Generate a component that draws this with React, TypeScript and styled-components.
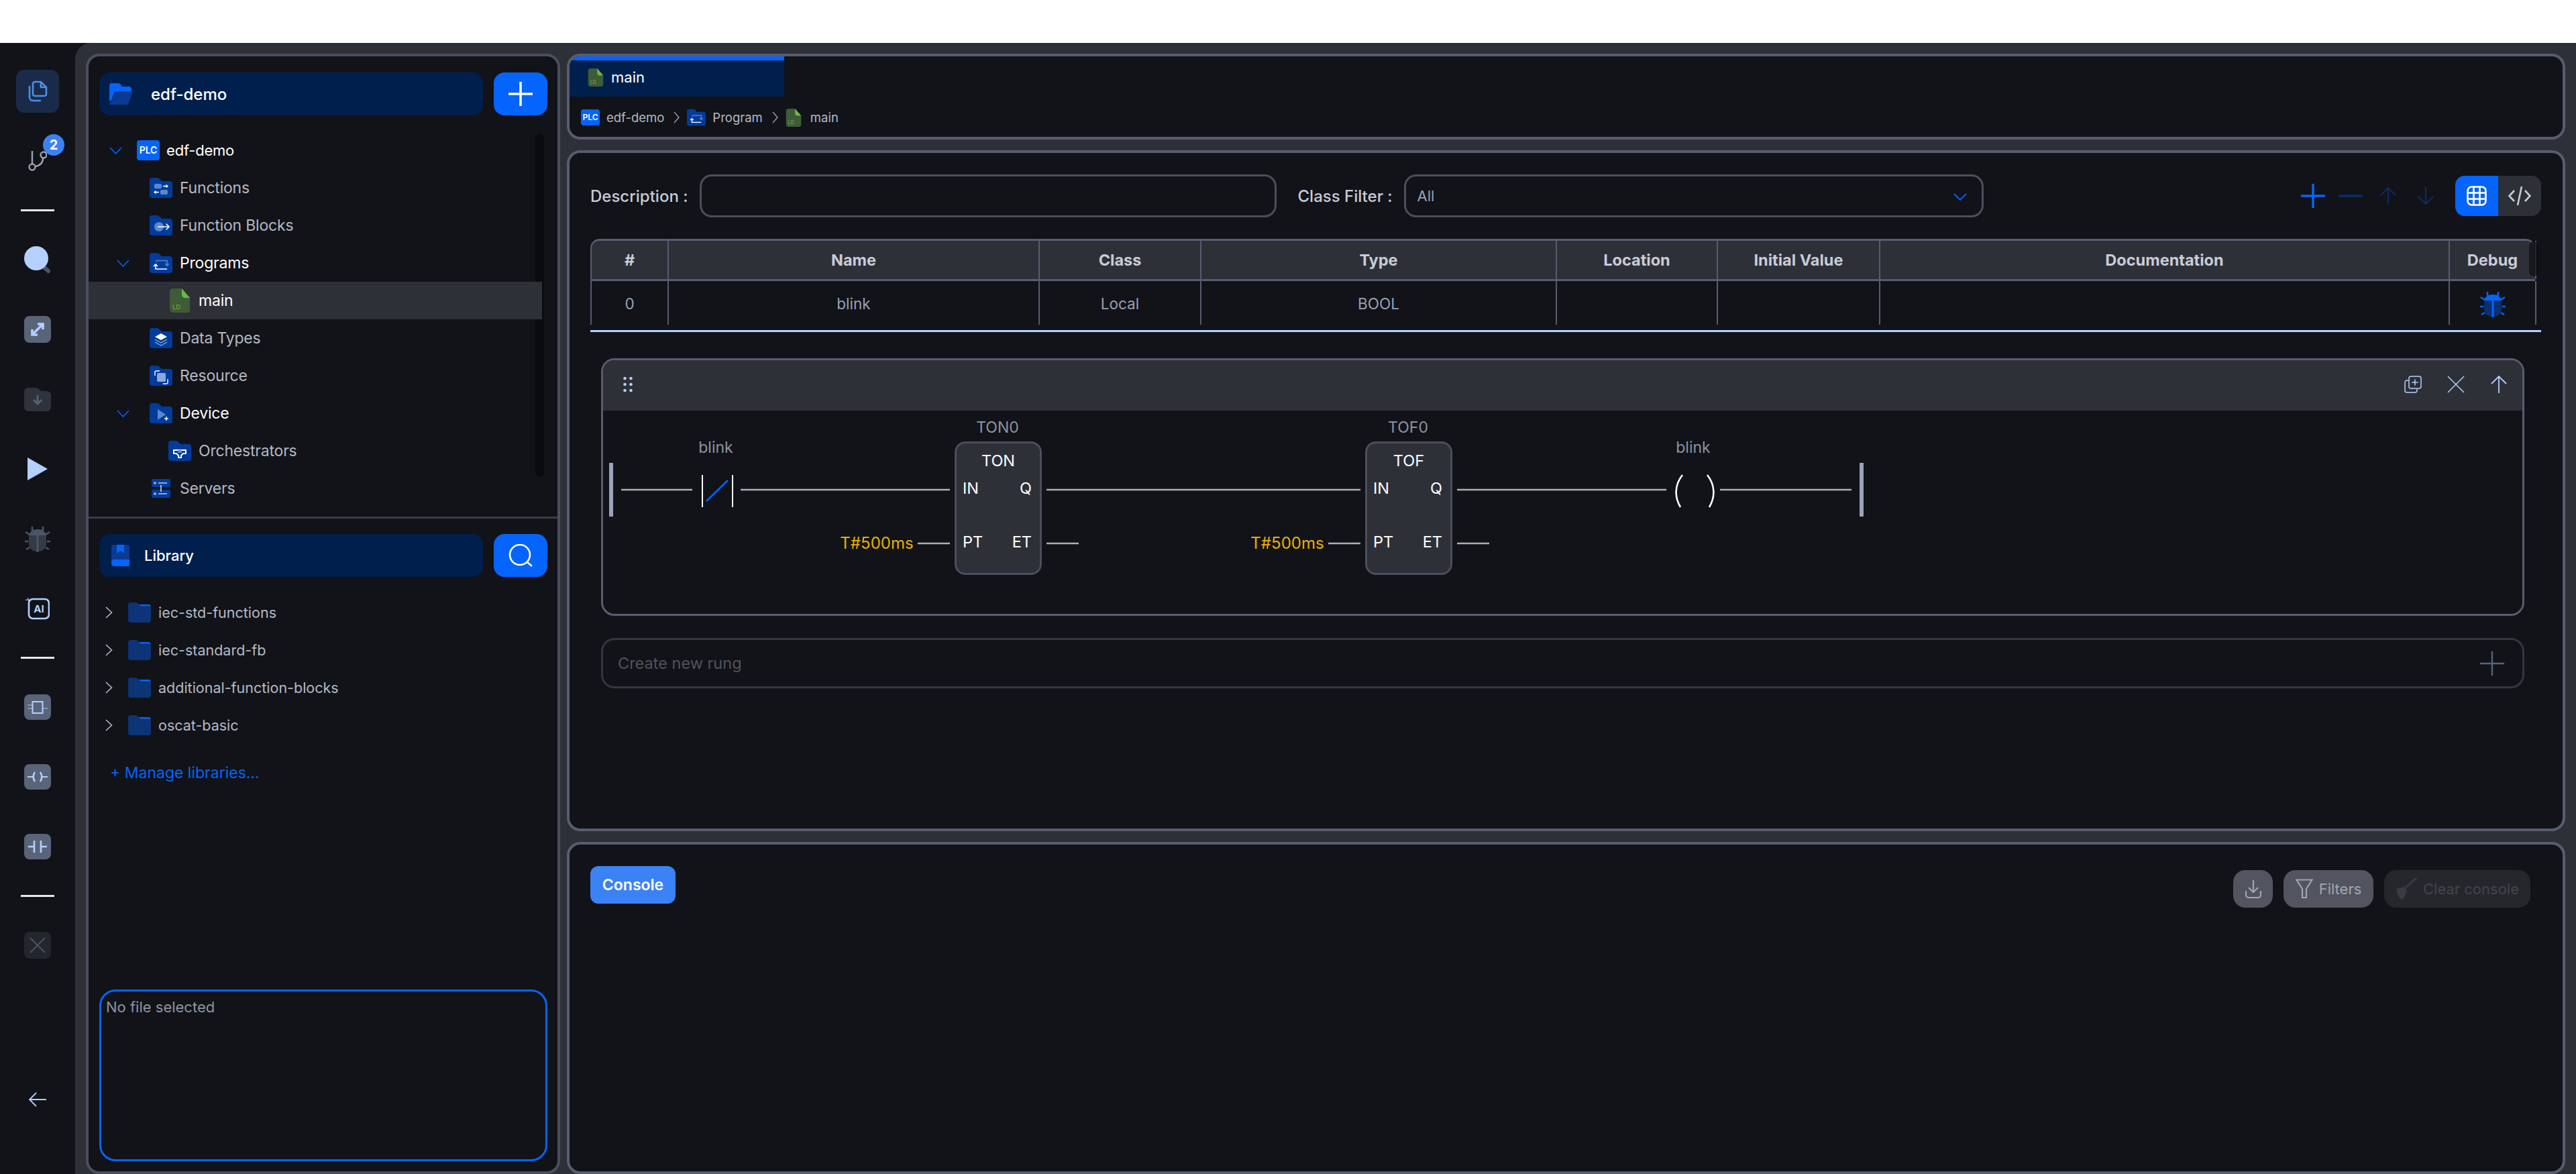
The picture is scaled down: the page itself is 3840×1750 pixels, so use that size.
import React from 'react';
import styled, { createGlobalStyle } from 'styled-components';

const GlobalStyle = createGlobalStyle`
  html, body {
    margin: 0;
    padding: 0;
    background: #ffffff;
    font-family: 'Inter', 'Liberation Sans', sans-serif;
  }
  * { box-sizing: border-box; }
`;

const colors = {
  panel: '#111318',
  shell: '#2e3038',
  border: '#4b4e5c',
  borderBright: '#585c70',
  blue: '#0464fb',
  navy: '#001f4d',
  folder: '#023c9b',
  pale: '#b4d0fe',
  slate: '#5a6478',
  dim: '#b4b9c4',
  label: '#8f93a0',
};

const Page = styled.div`
  width: 3840px;
  height: 1750px;
  padding-top: 64px;
  overflow: hidden;
`;

const Body = styled.div`
  display: flex;
  height: 1686px;
  background: ${colors.panel};
`;

const Rail = styled.nav`
  width: 112px;
  flex: none;
  display: flex;
  flex-direction: column;
  align-items: center;
  gap: 40px;
  padding: 40px 0 79px;
`;

const RailSlot = styled.div<{ $active?: boolean }>`
  position: relative;
  width: 64px;
  height: 64px;
  flex: none;
  display: flex;
  align-items: center;
  justify-content: center;
  border-radius: 12px;
  background: ${p => (p.$active ? '#1a2b4a' : 'transparent')};
`;

const RailFooter = styled(RailSlot)`
  margin-top: auto;
`;

const RailDivider = styled.div`
  width: 50px;
  height: 3px;
  flex: none;
  background: #e5e7eb;
`;

const RailBadge = styled.span`
  position: absolute;
  top: -8px;
  right: -8px;
  width: 32px;
  height: 32px;
  border-radius: 50%;
  background: #3b82f6;
  color: #ffffff;
  font-size: 20px;
  font-weight: 700;
  display: flex;
  align-items: center;
  justify-content: center;
`;

const Workspace = styled.main`
  flex: 1;
  min-width: 0;
  display: flex;
  gap: 10px;
  padding: 16px 16px 0;
  background: ${colors.shell};
  border-top-left-radius: 24px;
`;

const SidePanel = styled.aside`
  width: 707px;
  flex: none;
  display: flex;
  flex-direction: column;
  background: ${colors.panel};
  border: 4px solid ${colors.border};
  border-radius: 20px;
  overflow: hidden;
`;

const SideHeader = styled.div<{ $height: number }>`
  display: flex;
  gap: 16px;
  height: ${p => p.$height}px;
  flex: none;
  margin: 0 15px 0 16px;
`;

const SideTitle = styled.div<{ $gap: number; $pad: number; $size: number }>`
  flex: 1;
  display: flex;
  align-items: center;
  gap: ${p => p.$gap}px;
  padding-left: ${p => p.$pad}px;
  border-radius: 16px;
  background: ${colors.navy};
  color: #ffffff;
  font-size: ${p => p.$size}px;
  font-weight: 500;
`;

const SideAction = styled.div`
  width: 80px;
  flex: none;
  display: flex;
  align-items: center;
  justify-content: center;
  border-radius: 16px;
  background: ${colors.blue};
`;

const ProjectSection = styled.section`
  padding-top: 24px;
  height: 689px;
  flex: none;
  border-bottom: 3px solid #3a3d48;
`;

const TreeList = styled.div`
  position: relative;
  margin-top: 24px;
  padding-right: 23px;
`;

const TreeScrollbar = styled.div`
  position: absolute;
  top: 4px;
  right: 20px;
  width: 13px;
  height: 511px;
  border-radius: 7px;
  background: #0a0b0e;
`;

const TreeRow = styled.div<{ $indent: number; $active?: boolean; $selected?: boolean }>`
  position: relative;
  display: flex;
  align-items: center;
  height: 56px;
  padding-left: ${p => p.$indent}px;
  background: ${p => (p.$selected ? colors.shell : 'transparent')};
  color: ${p => (p.$active ? '#ffffff' : colors.dim)};
  font-size: 23px;
  letter-spacing: -0.2px;
`;

const TreeChevron = styled.svg`
  width: 19px;
  height: 11px;
  flex: none;
  fill: none;
  stroke: ${colors.blue};
  stroke-width: 1.6;
`;

const ChevronGap = styled.span<{ $width: number }>`
  width: ${p => p.$width}px;
  flex: none;
`;

const TreeLabel = styled.span<{ $gap: number; $size?: number }>`
  margin-left: ${p => p.$gap}px;
  font-size: ${p => p.$size ?? 23}px;
`;

const LibrarySection = styled.section`
  flex: 1;
  min-height: 0;
  display: flex;
  flex-direction: column;
  padding: 23px 0 15px;
`;

const LibraryList = styled.div`
  margin-top: 25px;
`;

const LibraryRow = styled.div`
  display: flex;
  align-items: center;
  height: 56px;
  padding-left: 25px;
  color: ${colors.dim};
  font-size: 21.5px;
`;

const LibraryLabel = styled.span`
  margin-left: 11px;
`;

const ManageLink = styled.div`
  margin: 29px 0 0 32px;
  color: ${colors.blue};
  font-size: 23px;
  line-height: 28px;
`;

const NotesBox = styled.div`
  margin: auto 15px 0 16px;
  height: 256px;
  padding: 10px 7px;
  border: 3px solid ${colors.blue};
  border-radius: 24px;
  color: ${colors.label};
  font-size: 22px;
`;

const MainColumn = styled.div`
  flex: 1;
  min-width: 0;
  display: flex;
  flex-direction: column;
  gap: 16px;
`;

const Card = styled.section`
  background: ${colors.panel};
  border: 4px solid ${colors.borderBright};
  border-radius: 20px;
  overflow: hidden;
`;

const TabsCard = styled(Card)`
  height: 128px;
  flex: none;
`;

const Tab = styled.div`
  width: 320px;
  height: 60px;
  display: flex;
  align-items: center;
  gap: 11px;
  padding: 0 0 4px 27px;
  background: ${colors.navy};
  border-top: 6px solid ${colors.blue};
  color: #ffffff;
  font-size: 22px;
`;

const Breadcrumb = styled.div`
  display: flex;
  align-items: center;
  height: 60px;
  padding: 2px 0 0 17px;
  color: ${colors.dim};
  font-size: 18.5px;
`;

const CrumbText = styled.span<{ $lead: number }>`
  margin: 0 14px 0 ${p => p.$lead}px;
`;

const CrumbArrow = styled.svg`
  width: 10px;
  height: 20px;
  margin-right: 10px;
  fill: none;
  stroke: #8f93a0;
  stroke-width: 1.6;
`;

const EditorCard = styled(Card)`
  height: 1015px;
  flex: none;
  padding: 32px 32px 0 31px;
`;

const Toolbar = styled.div`
  display: flex;
  align-items: center;
  height: 64px;
`;

const FieldLabel = styled.label`
  margin-right: 17px;
  color: #c8ccd6;
  font-size: 24px;
  font-weight: 500;
`;

const TextField = styled.div<{ $width: number; $gap?: number }>`
  position: relative;
  width: ${p => p.$width}px;
  height: 64px;
  margin-right: ${p => p.$gap ?? 0}px;
  display: flex;
  align-items: center;
  padding-left: 17px;
  border: 3px solid ${colors.border};
  border-radius: 18px;
  color: #9aa0b4;
  font-size: 22px;
`;

const SelectChevron = styled.svg`
  position: absolute;
  right: 22px;
  top: 25px;
  width: 20px;
  height: 11px;
  fill: none;
  stroke: ${colors.blue};
  stroke-width: 1.8;
`;

const RowActions = styled.div`
  display: flex;
  margin-left: auto;
  margin-right: 16px;
`;

const RowAction = styled.div`
  width: 56px;
  height: 56px;
  display: flex;
  align-items: center;
  justify-content: center;
`;

const ViewToggle = styled.div`
  display: flex;
  width: 128px;
  height: 60px;
  border-radius: 14px;
  overflow: hidden;
`;

const ToggleButton = styled.div<{ $on?: boolean }>`
  flex: 1;
  display: flex;
  align-items: center;
  justify-content: center;
  background: ${p => (p.$on ? colors.blue : colors.shell)};
`;

const TableWrap = styled.div`
  position: relative;
  margin-top: 32px;
  border-bottom: 3px solid ${colors.pale};
  padding-bottom: 8px;
`;

const columns = '115px 553px 241px 530px 240px 242px 849px 129px';

const HeadRow = styled.div`
  display: grid;
  grid-template-columns: ${columns};
  height: 63px;
  background: ${colors.shell};
  border-top: 3px solid ${colors.borderBright};
  border-bottom: 3px solid ${colors.borderBright};
  border-left: 2px solid ${colors.borderBright};
  border-top-left-radius: 14px;
  border-top-right-radius: 14px;
  width: 2899px;
`;

const DataRow = styled.div`
  display: grid;
  grid-template-columns: ${columns};
  height: 65px;
  border-left: 2px solid ${colors.borderBright};
  width: 2899px;
`;

const HeadCell = styled.div`
  display: flex;
  align-items: center;
  justify-content: center;
  border-right: 2px solid ${colors.borderBright};
  color: #c8ccd6;
  font-size: 23.5px;
  font-weight: 700;
`;

const DataCell = styled.div`
  display: flex;
  align-items: center;
  justify-content: center;
  padding-top: 2px;
  border-right: 2px solid ${colors.borderBright};
  color: #9aa0b4;
  font-size: 22.5px;
`;

const TableScrollbar = styled.div`
  position: absolute;
  top: 4px;
  right: 4px;
  width: 14px;
  height: 52px;
  border-radius: 7px;
  background: rgba(10, 11, 14, 0.65);
`;

const Rung = styled.div`
  margin: 39px 25px 0 16px;
  height: 384px;
  display: flex;
  flex-direction: column;
  border: 3px solid ${colors.borderBright};
  border-radius: 20px;
  overflow: hidden;
`;

const RungHeader = styled.div`
  display: flex;
  align-items: center;
  justify-content: space-between;
  height: 75px;
  flex: none;
  padding: 0 3px 4px 30px;
  background: ${colors.shell};
`;

const RungActions = styled.div`
  display: flex;
`;

const RungAction = styled.div`
  width: 64px;
  display: flex;
  justify-content: center;
`;

const RungCanvas = styled.div`
  position: relative;
  flex: 1;
`;

const Wires = styled.svg`
  position: absolute;
  left: 0;
  top: 0;
  width: 2861px;
  height: 302px;
`;

const NodeLabel = styled.span<{ $x: number; $y: number; $tone: string; $size: number }>`
  position: absolute;
  left: ${p => p.$x}px;
  top: ${p => p.$y}px;
  transform: translate(-50%, -50%);
  color: ${p => p.$tone};
  font-size: ${p => p.$size}px;
  white-space: nowrap;
`;

const FbBlock = styled.div<{ $x: number }>`
  position: absolute;
  left: ${p => p.$x}px;
  top: 46px;
  width: 130px;
  height: 199px;
  display: flex;
  flex-direction: column;
  background: ${colors.shell};
  border: 3px solid ${colors.border};
  border-radius: 16px;
  color: #ffffff;
  font-size: 23.5px;
`;

const FbTitle = styled.div`
  height: 50px;
  display: flex;
  align-items: center;
  justify-content: center;
`;

const FbPins = styled.div`
  display: flex;
  flex-direction: column;
  gap: 48px;
  padding: 0 12px 0 9px;
`;

const FbPinRow = styled.div`
  display: flex;
  justify-content: space-between;
  align-items: center;
  height: 32px;
`;

const NewRung = styled.div`
  margin: 33px 25px 0 16px;
  height: 75px;
  display: flex;
  align-items: center;
  justify-content: space-between;
  padding: 0 27px 0 22px;
  border: 3px solid #33363f;
  border-radius: 20px;
  color: #50535c;
  font-size: 23.5px;
`;

const ConsoleCard = styled(Card)`
  flex: 1;
  min-height: 0;
  display: flex;
  align-items: flex-start;
  justify-content: space-between;
  padding: 32px 48px 0 31px;
`;

const ConsoleTab = styled.div`
  width: 127px;
  height: 56px;
  display: flex;
  align-items: center;
  justify-content: center;
  border-radius: 12px;
  background: #3b82f6;
  color: #ffffff;
  font-size: 23px;
  font-weight: 600;
`;

const ConsoleTools = styled.div`
  display: flex;
  gap: 16px;
  margin-top: 6px;
`;

const ConsoleButton = styled.div<{ $off?: boolean; $width: number }>`
  width: ${p => p.$width}px;
  height: 56px;
  display: flex;
  align-items: center;
  justify-content: center;
  gap: 9px;
  border-radius: 18px;
  background: ${p => (p.$off ? '#25272c' : '#52555f')};
  color: ${p => (p.$off ? '#42454c' : '#a3a6af')};
  font-size: 22px;
`;

const FlexIcon = styled.svg<{ $left?: number }>`
  flex: none;
  margin-left: ${p => p.$left ?? 0}px;
`;

const FitIcon = () => (
  <svg width="40" height="40" viewBox="0 0 40 40">
    <rect width="40" height="40" rx="8" fill={colors.slate} />
    <path d="M12 28 28 12M12 20v8h8M20 12h8v8" fill="none" stroke={colors.pale} strokeWidth="3.6" />
  </svg>
);

const FolderDownIcon = () => (
  <svg width="40" height="35" viewBox="0 0 40 35">
    <path d="M6 0h12c2 0 3 1 5 3 1 1 2 2 4 2h7a6 6 0 0 1 6 6v18a6 6 0 0 1-6 6H6a6 6 0 0 1-6-6V6a6 6 0 0 1 6-6z" fill="#2f333c" />
    <path d="M20 11v13M14 18l6 6 6-6" fill="none" stroke="#55617a" strokeWidth="3" />
  </svg>
);

const BugIcon = ({ shell, dark, size }: { shell: string; dark: string; size: number }) => (
  <svg width={size} height={size} viewBox="0 0 38 40">
    <path d="M11 2v6M27 2v6M7 14 1 10M31 14l6-4M5 24H0M33 24h5M7 33l-5 3M31 33l5 3" fill="none" stroke={shell} strokeWidth="2.6" />
    <path d="M6 16C7 9 12 6 19 6s12 3 13 10z" fill={shell} />
    <path d="M6 15h13v24C11 39 6 35 6 27z" fill={dark} />
    <path d="M32 15H19v24c8 0 13-4 13-12z" fill={dark} />
    <path d="M19 14v26" stroke={shell} strokeWidth="3" />
  </svg>
);

const FolderShape = ({ fill = colors.folder }: { fill?: string }) => (
  <path d="M4 0h7c2 0 3 1 4 2l2 2c1 1 2 1 3 1h10a4 4 0 0 1 4 4v17a4 4 0 0 1-4 4H4a4 4 0 0 1-4-4V4a4 4 0 0 1 4-4z" fill={fill} />
);

const glyphs: Record<string, React.ReactNode> = {
  functions: (
    <>
      <rect x="7" y="9" width="11" height="7" rx="2" fill="#5c86d0" />
      <rect x="16" y="18" width="11" height="7" rx="2" fill="#5c86d0" />
      <path d="M20 12.5h7M24.5 10.5l2.5 2-2.5 2M14 21.500H7M9.500 19.500 7 21.500l2.500 2" fill="none" stroke="#fff" strokeWidth="1.3" />
    </>
  ),
  blocks: (
    <>
      <circle cx="14" cy="17" r="7" fill="#5c86d0" />
      <path d="M12 17h17M24.500 12.500 29 17l-4.500 4.500" fill="none" stroke="#fff" strokeWidth="1.5" />
    </>
  ),
  programs: (
    <>
      <path d="M10 13.500V11.500h16v7" fill="none" stroke="#5c86d0" strokeWidth="1.5" />
      <path d="M23 16l3 3 3-3" fill="none" stroke="#5c86d0" strokeWidth="1.5" />
      <path d="M26 24H9v-7M6 20l3-3 3 3" fill="none" stroke="#fff" strokeWidth="1.6" />
    </>
  ),
  types: (
    <>
      <path d="M17 8l9 5-9 5-9-5z" fill="#fff" />
      <path d="M8 17l9 5 9-5M8 21l9 5 9-5" fill="none" stroke="#8aa9e0" strokeWidth="1.3" />
    </>
  ),
  resource: (
    <>
      <rect x="11" y="11" width="13" height="13" rx="2" fill="#8aa9e0" />
      <path d="M8 15v-5a2 2 0 0 1 2-2h5M27 20v5a2 2 0 0 1-2 2h-5" fill="none" stroke="#fff" strokeWidth="1.4" />
    </>
  ),
  device: (
    <>
      <path d="M12 9l12 8-12 8z" fill="#5c86d0" />
      <path d="M22 23h6M25 20v6" stroke="#fff" strokeWidth="1.5" />
    </>
  ),
  orchestrators: (
    <>
      <path d="M8 14h18v5h-4l-3 3v3h-4v-3l-3-3H8z" fill="none" stroke="#fff" strokeWidth="2" />
      <rect x="14" y="14" width="6" height="4" fill="#5c86d0" />
    </>
  ),
};

const TreeFolderIcon = ({ glyph }: { glyph: string }) => (
  <FlexIcon width="34" height="30" viewBox="0 0 34 30">
    <FolderShape />
    {glyphs[glyph]}
  </FlexIcon>
);

const ServersIcon = () => (
  <FlexIcon $left={3} width="28" height="28" viewBox="0 0 28 28">
    <rect width="28" height="12" rx="2" fill={colors.folder} />
    <rect y="16" width="28" height="12" rx="2" fill={colors.folder} />
    <circle cx="5" cy="6" r="2" fill="#8aa9e0" />
    <circle cx="5" cy="22" r="2" fill="#8aa9e0" />
    <path d="M10 6h13M10 22h13" stroke="#8aa9e0" strokeWidth="2" />
    <path d="M14 9v10" stroke="#dfe7f7" strokeWidth="1.5" />
  </FlexIcon>
);

const LdFileIcon = ({ w, h }: { w: number; h: number }) => (
  <FlexIcon width={w} height={h} viewBox="0 0 30 36">
    <path d="M5 0h13l12 14v18a4 4 0 0 1-4 4H5a5 5 0 0 1-5-5V5a5 5 0 0 1 5-5z" fill="#3e5c37" />
    <path d="M18 0l12 14H22a5 5 0 0 1-4-5z" fill="#6fb544" />
    <text x="4" y="31" fontSize="9.500" fill="#6fb544" fontFamily="Inter, sans-serif">LD</text>
  </FlexIcon>
);

const PlcIcon = ({ w, h, font }: { w: number; h: number; font: number }) => (
  <FlexIcon width={w} height={h} viewBox={`0 0 ${w} ${h}`}>
    <rect width={w} height={h} rx="4" fill={colors.blue} />
    <text x={w / 2} y={h / 2 + font * 0.37} textAnchor="middle" fontSize={font} fontWeight="600" fill="#fff" fontFamily="Inter, sans-serif">PLC</text>
  </FlexIcon>
);

const Chevron = () => (
  <TreeChevron viewBox="0 0 19 11">
    <path d="M1 1l8.500 9L18 1" />
  </TreeChevron>
);

const LibraryFolder = () => (
  <FlexIcon $left={23} width="34" height="30" viewBox="0 0 34 30">
    <path d="M14 3h16a4 4 0 0 1 4 4v6H20z" fill={colors.blue} />
    <path d="M4 0h7c2 0 3 1 4 2l2 2c1 1 2 1.500 3 1.500h14V26a4 4 0 0 1-4 4H4a4 4 0 0 1-4-4V4a4 4 0 0 1 4-4z" fill="#0d3476" />
  </FlexIcon>
);

const columnsData = [
  ['#', '0'],
  ['Name', 'blink'],
  ['Class', 'Local'],
  ['Type', 'BOOL'],
  ['Location', ''],
  ['Initial Value', ''],
  ['Documentation', ''],
];

const libraries = ['iec-std-functions', 'iec-standard-fb', 'additional-function-blocks', 'oscat-basic'];

const Block = ({ x, name }: { x: number; name: string }) => (
  <FbBlock $x={x}>
    <FbTitle>{name}</FbTitle>
    <FbPins>
      <FbPinRow><span>IN</span><span>Q</span></FbPinRow>
      <FbPinRow><span>PT</span><span>ET</span></FbPinRow>
    </FbPins>
  </FbBlock>
);

const ProjectTree = () => (
  <TreeList>
    <TreeScrollbar />
    <TreeRow $indent={31} $active>
      <Chevron />
      <ChevronGap $width={22} />
      <PlcIcon w={34} h={30} font={14} />
      <TreeLabel $gap={10} $size={22}>edf-demo</TreeLabel>
    </TreeRow>
    <TreeRow $indent={91}>
      <TreeFolderIcon glyph="functions" />
      <TreeLabel $gap={11}>Functions</TreeLabel>
    </TreeRow>
    <TreeRow $indent={91}>
      <TreeFolderIcon glyph="blocks" />
      <TreeLabel $gap={11}>Function Blocks</TreeLabel>
    </TreeRow>
    <TreeRow $indent={42} $active>
      <Chevron />
      <ChevronGap $width={30} />
      <TreeFolderIcon glyph="programs" />
      <TreeLabel $gap={11}>Programs</TreeLabel>
    </TreeRow>
    <TreeRow $indent={121} $active $selected>
      <LdFileIcon w={30} h={36} />
      <TreeLabel $gap={13}>main</TreeLabel>
    </TreeRow>
    <TreeRow $indent={91}>
      <TreeFolderIcon glyph="types" />
      <TreeLabel $gap={11}>Data Types</TreeLabel>
    </TreeRow>
    <TreeRow $indent={91}>
      <TreeFolderIcon glyph="resource" />
      <TreeLabel $gap={11}>Resource</TreeLabel>
    </TreeRow>
    <TreeRow $indent={42} $active>
      <Chevron />
      <ChevronGap $width={30} />
      <TreeFolderIcon glyph="device" />
      <TreeLabel $gap={11}>Device</TreeLabel>
    </TreeRow>
    <TreeRow $indent={119}>
      <TreeFolderIcon glyph="orchestrators" />
      <TreeLabel $gap={11}>Orchestrators</TreeLabel>
    </TreeRow>
    <TreeRow $indent={91}>
      <ServersIcon />
      <TreeLabel $gap={14}>Servers</TreeLabel>
    </TreeRow>
  </TreeList>
);

const App: React.FC = () => {
  return (
    <Page>
      <GlobalStyle />
      <Body>
        <Rail>
          <RailSlot $active>
            <svg width="30" height="32" viewBox="0 0 30 32" fill="none" stroke="#4c8fe8" strokeWidth="2.6">
              <path d="M11 2h9l8 8v10a3 3 0 0 1-3 3H11a3 3 0 0 1-3-3V5a3 3 0 0 1 3-3z" />
              <path d="M20 2v8h8" />
              <path d="M3 8v17a5 5 0 0 0 5 5h12" />
            </svg>
          </RailSlot>
          <RailSlot>
            <svg width="28" height="30" viewBox="0 0 28 30" fill="none" stroke="#a0a3ae" strokeWidth="2.4">
              <path d="M6 0v20" />
              <circle cx="6" cy="24" r="4.500" />
              <circle cx="23" cy="6" r="4.500" />
              <path d="M10 23c8-1 12-5 12-12" />
            </svg>
            <RailBadge>2</RailBadge>
          </RailSlot>
          <RailDivider />
          <RailSlot>
            <svg width="42" height="42" viewBox="0 0 42 42">
              <path d="M28 30l9 8" stroke="#4b5568" strokeWidth="6" strokeLinecap="round" />
              <circle cx="19" cy="19" r="18" fill={colors.pale} />
            </svg>
          </RailSlot>
          <RailSlot><FitIcon /></RailSlot>
          <RailSlot><FolderDownIcon /></RailSlot>
          <RailSlot>
            <svg width="30" height="34" viewBox="0 0 30 34"><path d="M0 0l30 17L0 34z" fill={colors.pale} /></svg>
          </RailSlot>
          <RailSlot>
            <BugIcon shell="#4b5568" dark="#343a46" size={40} />
          </RailSlot>
          <RailSlot>
            <svg width="36" height="34" viewBox="0 0 36 34" fill="none">
              <rect x="5" y="3" width="30" height="29" rx="6" stroke={colors.pale} strokeWidth="2.600" />
              <path d="M0 4h6M4 1v5" stroke={colors.pale} strokeWidth="1" />
              <text x="20" y="23" textAnchor="middle" fontSize="15" fontWeight="700" fill={colors.pale} fontFamily="Inter, sans-serif">AI</text>
            </svg>
          </RailSlot>
          <RailDivider />
          <RailSlot>
            <svg width="40" height="38" viewBox="0 0 40 38" fill="none">
              <rect width="40" height="38" rx="8" fill={colors.slate} />
              <rect x="12.500" y="11" width="15" height="17" stroke={colors.pale} strokeWidth="2" />
              <path d="M5 16h7M5 21h7M28 21h7" stroke={colors.pale} strokeOpacity="0.6" strokeWidth="1.500" />
            </svg>
          </RailSlot>
          <RailSlot>
            <svg width="40" height="38" viewBox="0 0 40 38" fill="none">
              <rect width="40" height="38" rx="8" fill={colors.slate} />
              <path d="M5 19h8M27 19h8" stroke={colors.pale} strokeWidth="2" />
              <path d="M16 12c-3 4-3 10 0 14M24 12c3 4 3 10 0 14" stroke={colors.pale} strokeWidth="2.600" />
            </svg>
          </RailSlot>
          <RailSlot>
            <svg width="40" height="38" viewBox="0 0 40 38" fill="none">
              <rect width="40" height="38" rx="8" fill={colors.slate} />
              <path d="M6 19h9M15 10v18M25 10v18M25 19h9" stroke={colors.pale} strokeWidth="2.600" />
            </svg>
          </RailSlot>
          <RailDivider />
          <RailSlot>
            <svg width="40" height="40" viewBox="0 0 40 40" fill="none">
              <rect width="40" height="40" rx="8" fill="#23262d" />
              <path d="M9 9l22 22M31 9 9 31" stroke="#4d5566" strokeWidth="1.800" />
            </svg>
          </RailSlot>
          <RailFooter>
            <svg width="26" height="22" viewBox="0 0 26 22" fill="none" stroke={colors.pale} strokeWidth="1.800">
              <path d="M26 11H1M11 1 1 11l10 10" />
            </svg>
          </RailFooter>
        </Rail>

        <Workspace>
          <SidePanel>
            <ProjectSection>
              <SideHeader $height={64}>
                <SideTitle $gap={28} $pad={15} $size={24}>
                  <FlexIcon width="34" height="32" viewBox="0 0 34 32">
                    <path d="M4 0h9c2 0 3 1 4 2l2 3h10a4 4 0 0 1 4 4v4H8L3 26H0V4a4 4 0 0 1 4-4z" fill={colors.blue} />
                    <path d="M8 12h24a2 2 0 0 1 2 3l-5 14a4 4 0 0 1-4 3H0z" fill="#0a3a94" />
                  </FlexIcon>
                  edf-demo
                </SideTitle>
                <SideAction>
                  <svg width="36" height="36" viewBox="0 0 36 36"><path d="M18 0v36M0 18h36" stroke="#fff" strokeWidth="3.500" strokeLinecap="round" /></svg>
                </SideAction>
              </SideHeader>
              <ProjectTree />
            </ProjectSection>

            <LibrarySection>
              <SideHeader $height={64}>
                <SideTitle $gap={22} $pad={18} $size={22}>
                  <FlexIcon width="27" height="32" viewBox="0 0 27 32">
                    <path d="M4 0h19a4 4 0 0 1 4 4v20H0V4a4 4 0 0 1 4-4z" fill="#0a3a94" />
                    <path d="M8 0h11v13l-5.500-4L8 13z" fill={colors.blue} />
                    <path d="M4 22h23v10H4a4 4 0 0 1-4-4v-2a4 4 0 0 1 4-4z" fill={colors.blue} />
                  </FlexIcon>
                  Library
                </SideTitle>
                <SideAction>
                  <svg width="36" height="34" viewBox="0 0 36 34" fill="none" stroke="#fff" strokeWidth="2.600">
                    <circle cx="17" cy="16" r="15" />
                    <path d="M28 27l7 6" />
                  </svg>
                </SideAction>
              </SideHeader>
              <LibraryList>
                {libraries.map(name => (
                  <LibraryRow key={name}>
                    <FlexIcon width="11" height="18" viewBox="0 0 11 18" fill="none" stroke={colors.dim} strokeWidth="1.600">
                      <path d="M1 1l8.500 8L1 17" />
                    </FlexIcon>
                    <LibraryFolder />
                    <LibraryLabel>{name}</LibraryLabel>
                  </LibraryRow>
                ))}
              </LibraryList>
              <ManageLink>+ Manage libraries…</ManageLink>
              <NotesBox>No file selected</NotesBox>
            </LibrarySection>
          </SidePanel>

          <MainColumn>
            <TabsCard>
              <Tab>
                <LdFileIcon w={24} h={27} />
                main
              </Tab>
              <Breadcrumb>
                <PlcIcon w={28} h={24} font={12} />
                <CrumbText $lead={10}>edf-demo</CrumbText>
                <CrumbArrow viewBox="0 0 10 20"><path d="M1 2l7 8-7 8" /></CrumbArrow>
                <FlexIcon width="28" height="26" viewBox="0 0 34 30">
                  <FolderShape />
                  {glyphs.programs}
                </FlexIcon>
                <CrumbText $lead={10}>Program</CrumbText>
                <CrumbArrow viewBox="0 0 10 20"><path d="M1 2l7 8-7 8" /></CrumbArrow>
                <LdFileIcon w={24} h={27} />
                <CrumbText $lead={13}>main</CrumbText>
              </Breadcrumb>
            </TabsCard>

            <EditorCard>
              <Toolbar>
                <FieldLabel>Description :</FieldLabel>
                <TextField $width={860} $gap={32} />
                <FieldLabel>Class Filter :</FieldLabel>
                <TextField $width={864}>
                  All
                  <SelectChevron viewBox="0 0 20 11"><path d="M1 1l9 9 9-9" /></SelectChevron>
                </TextField>
                <RowActions>
                  <RowAction>
                    <svg width="36" height="36" viewBox="0 0 36 36"><path d="M18 0v36M0 18h36" stroke={colors.blue} strokeWidth="3.500" strokeLinecap="round" /></svg>
                  </RowAction>
                  <RowAction>
                    <svg width="36" height="4" viewBox="0 0 36 4"><path d="M2 2h32" stroke="#0b2c63" strokeWidth="4" strokeLinecap="round" /></svg>
                  </RowAction>
                  <RowAction>
                    <svg width="24" height="26" viewBox="0 0 24 26" fill="none" stroke="#0b2c63" strokeWidth="2.200"><path d="M12 26V1M1 12 12 1l11 11" /></svg>
                  </RowAction>
                  <RowAction>
                    <svg width="24" height="26" viewBox="0 0 24 26" fill="none" stroke="#0b2c63" strokeWidth="2.200"><path d="M12 0v25M1 14l11 11 11-11" /></svg>
                  </RowAction>
                </RowActions>
                <ViewToggle>
                  <ToggleButton $on>
                    <svg width="30" height="30" viewBox="0 0 30 30" fill="none" stroke="#fff" strokeWidth="2.600">
                      <rect x="1.500" y="1.500" width="27" height="27" rx="6" />
                      <path d="M1.500 10.500h27M1.500 19.500h27M10.500 1.500v27M19.500 1.500v27" />
                    </svg>
                  </ToggleButton>
                  <ToggleButton>
                    <svg width="34" height="30" viewBox="0 0 34 30" fill="none" stroke="#c8ccd6" strokeWidth="2.600">
                      <path d="M9 7 1.500 15 9 23M25 7l7.500 8-7.500 8M20 1l-6 28" />
                    </svg>
                  </ToggleButton>
                </ViewToggle>
              </Toolbar>

              <TableWrap>
                <HeadRow>
                  {columnsData.map(([head]) => <HeadCell key={head}>{head}</HeadCell>)}
                  <HeadCell>Debug</HeadCell>
                </HeadRow>
                <DataRow>
                  {columnsData.map(([head, value]) => <DataCell key={head}>{value}</DataCell>)}
                  <DataCell>
                    <BugIcon shell={colors.blue} dark="#0b3070" size={40} />
                  </DataCell>
                </DataRow>
                <TableScrollbar />
              </TableWrap>

              <Rung>
                <RungHeader>
                  <svg width="14" height="24" viewBox="0 0 14 24" fill={colors.pale}>
                    <circle cx="2.500" cy="3" r="2.300" /><circle cx="11.500" cy="3" r="2.300" />
                    <circle cx="2.500" cy="12" r="2.300" /><circle cx="11.500" cy="12" r="2.300" />
                    <circle cx="2.500" cy="21" r="2.300" /><circle cx="11.500" cy="21" r="2.300" />
                  </svg>
                  <RungActions>
                    <RungAction>
                      <svg width="26" height="26" viewBox="0 0 26 26" fill="none" stroke={colors.pale} strokeWidth="1.500">
                        <rect x="7" y="1" width="18" height="18" rx="3" />
                        <path d="M16 5.500v9M11.500 10h9M6 7H4a3 3 0 0 0-3 3v12a3 3 0 0 0 3 3h12a3 3 0 0 0 3-3v-2" />
                      </svg>
                    </RungAction>
                    <RungAction>
                      <svg width="26" height="26" viewBox="0 0 26 26" fill="none" stroke={colors.pale} strokeWidth="1.500"><path d="M1 1l24 24M25 1 1 25" /></svg>
                    </RungAction>
                    <RungAction>
                      <svg width="24" height="26" viewBox="0 0 24 26" fill="none" stroke={colors.pale} strokeWidth="1.800"><path d="M12 26V1M1 12 12 1l11 11" /></svg>
                    </RungAction>
                  </RungActions>
                </RungHeader>

                <RungCanvas>
                  <Wires viewBox="899 612 2861 302">
                    <path d="M926 730h106M1104 730h312M1560 730h468M2172 730h312M2564 730h196M1368 810h48M1560 810h48M1980 810h48M2172 810h48" stroke="#b0b0b0" strokeWidth="2.600" />
                    <path d="M911 690v80M2775 690v80" stroke="#9ca3b8" strokeWidth="6" />
                    <path d="M1047 708v48M1092 708v48" stroke="#fff" strokeWidth="2" />
                    <path d="M1053 747l32-31" stroke={colors.blue} strokeWidth="2.600" />
                    <path d="M2508 708c-12 15-12 33-3 48M2545 708c12 15 12 33 3 48" fill="none" stroke="#fff" strokeWidth="2.600" />
                  </Wires>
                  <NodeLabel $x={168} $y={55} $size={23} $tone={colors.label}>blink</NodeLabel>
                  <NodeLabel $x={588} $y={25} $size={23} $tone={colors.label}>TON0</NodeLabel>
                  <NodeLabel $x={408} $y={197} $size={24} $tone="#eab000">T#500ms</NodeLabel>
                  <Block x={524} name="TON" />
                  <NodeLabel $x={1200} $y={25} $size={23} $tone={colors.label}>TOF0</NodeLabel>
                  <NodeLabel $x={1020} $y={197} $size={24} $tone="#eab000">T#500ms</NodeLabel>
                  <Block x={1136} name="TOF" />
                  <NodeLabel $x={1625} $y={55} $size={23} $tone={colors.label}>blink</NodeLabel>
                </RungCanvas>
              </Rung>

              <NewRung>
                Create new rung
                <svg width="36" height="36" viewBox="0 0 36 36"><path d="M18 0v36M0 18h36" stroke="#5a6478" strokeWidth="2.400" /></svg>
              </NewRung>
            </EditorCard>

            <ConsoleCard>
              <ConsoleTab>Console</ConsoleTab>
              <ConsoleTools>
                <ConsoleButton $width={59}>
                  <svg width="26" height="28" viewBox="0 0 26 28" fill="none" stroke="#a3a6af" strokeWidth="2.200">
                    <path d="M13 1v18M6 12l7 7 7-7M2 17v6a4 4 0 0 0 4 4h14a4 4 0 0 0 4-4v-6" />
                  </svg>
                </ConsoleButton>
                <ConsoleButton $width={134}>
                  <svg width="26" height="30" viewBox="0 0 26 30" fill="none" stroke="#a3a6af" strokeWidth="2.200">
                    <path d="M1.500 1.500h23L16 15v13h-6V15z" />
                  </svg>
                  Filters
                </ConsoleButton>
                <ConsoleButton $off $width={218}>
                  <svg width="32" height="34" viewBox="0 0 32 34" fill="#383b42">
                    <path d="M1 16c6 0 10-1 13-3l3 6c-1 6-4 11-8 14C4 30 2 23 1 16z" />
                    <path d="M16 14 31 1" stroke="#383b42" strokeWidth="3" />
                  </svg>
                  Clear console
                </ConsoleButton>
              </ConsoleTools>
            </ConsoleCard>
          </MainColumn>
        </Workspace>
      </Body>
    </Page>
  );
};

export default App;
